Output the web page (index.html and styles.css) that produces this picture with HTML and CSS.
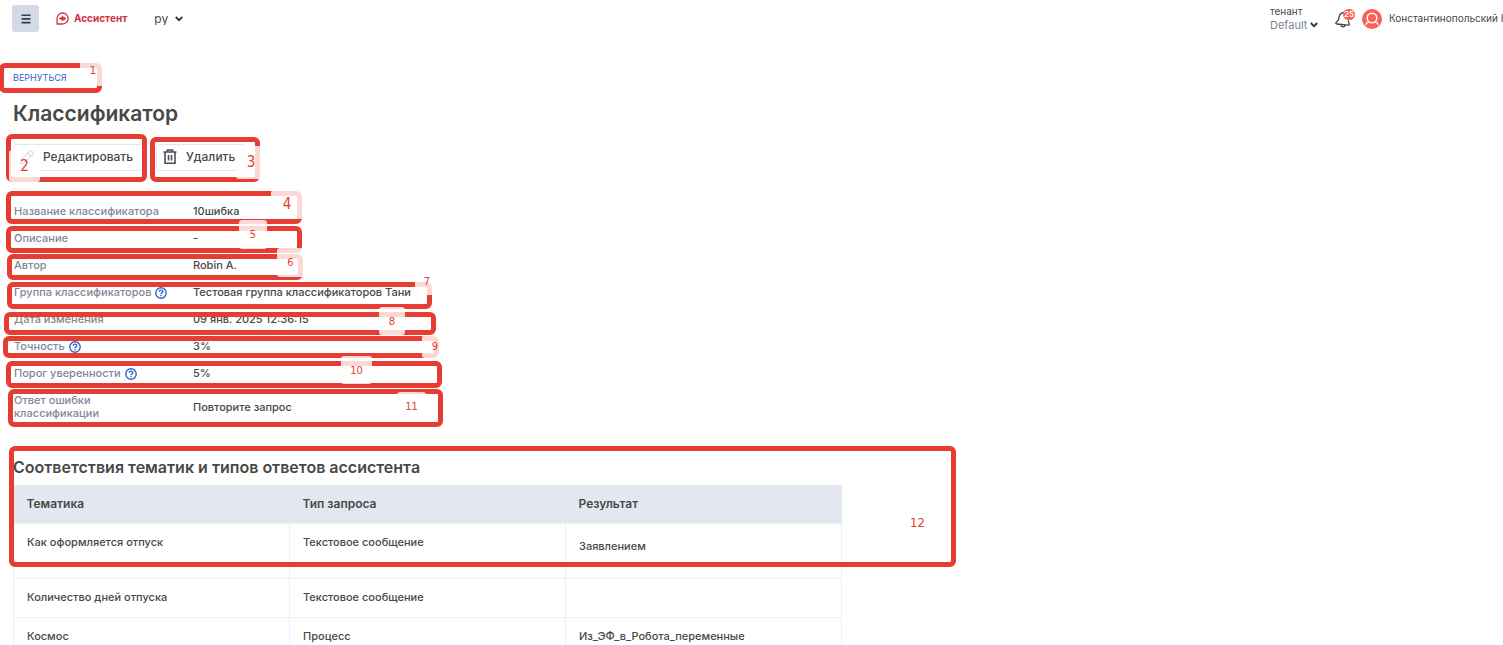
FILE: index.html
```html
<!DOCTYPE html>
<html lang="ru">
<head>
    <meta charset="UTF-8">
    <meta name="viewport" content="width=device-width, initial-scale=1.0">
    <title>Классификатор</title>
    <link rel="stylesheet" href="styles.css">
</head>
<body>
    <header class="topbar">
        <div class="topbar-left">
            <button class="menu-button" type="button" aria-label="Меню">
                <svg width="10" height="10" viewBox="0 0 10 10" stroke="#3a3f47" stroke-width="1.6"><path d="M0.5 1.2h9M0.5 4.9h9M0.5 8.6h9"/></svg>
            </button>
            <a class="brand" href="#">
                <svg width="13" height="13" viewBox="0 0 13 13" fill="none" stroke="#d0323f" stroke-width="1.3" stroke-linecap="round" stroke-linejoin="round">
                    <path d="M1.1 12V6.5a5.5 5.5 0 1 1 5.5 5.5z"/>
                    <path d="M3.8 6.5h5.6M5.3 5.4v2.2M6.7 4.4v4.2M8.1 5.4v2.2"/>
                </svg>
                Ассистент
            </a>
            <div class="picker">
                <select class="lang-select" aria-label="Язык">
                    <option>ру</option>
                </select>
                <svg width="8" height="6" viewBox="0 0 8 6" fill="none" stroke="#33373d" stroke-width="1.8"><path d="M0.8 1l3.2 3.2L7.2 1"/></svg>
            </div>
        </div>
        <div class="topbar-right">
            <div class="tenant">
                <label for="tenant">тенант</label>
                <div class="picker">
                    <select id="tenant" class="tenant-select">
                        <option>Default</option>
                    </select>
                    <svg width="8" height="6" viewBox="0 0 8 6" fill="none" stroke="#33373d" stroke-width="1.8"><path d="M0.8 1l3.2 3.2L7.2 1"/></svg>
                </div>
            </div>
            <button class="bell" type="button" aria-label="Уведомления">
                <svg width="17" height="17" viewBox="0 0 17 17" fill="none" stroke="#3f444c" stroke-width="1.3" stroke-linejoin="round">
                    <path d="M10.5 1.8C7.4 0.8 4.8 2.6 4.2 5.4L3.4 9 1 11.6c-.4.6 0 1.2.7 1.4l11.6 1.2c.8 0 1.2-.6.9-1.3L13.2 9.5"/>
                    <path d="M5.8 13.5c.3 2.8 3.8 3.1 4.5.5"/>
                </svg>
                <span class="badge">25</span>
            </button>
            <svg class="avatar" width="20" height="20" viewBox="0 0 20 20">
                <circle cx="10" cy="10" r="10" fill="#fb5f57"/>
                <g fill="none" stroke="#fff" stroke-width="1.5">
                    <circle cx="10" cy="9" r="4.8"/>
                    <path d="M3.8 15.8c.5-1.8 1.8-2.8 3.4-3.3M16.2 15.8c-.5-1.8-1.8-2.8-3.4-3.3"/>
                </g>
            </svg>
            <span class="user-name">Константинопольский Н</span>
        </div>
    </header>

    <main class="page">
        <a class="back" href="#">ВЕРНУТЬСЯ</a>
        <h1>Классификатор</h1>
        <div class="actions">
            <button type="button">
                <svg width="16" height="16" viewBox="0 0 16 16" fill="none" stroke="#4a4e55" stroke-width="1.2" stroke-linejoin="round"><path d="M1.5 14.5l1-4L10.8 2.2a1.4 1.4 0 0 1 2 0l1 1a1.4 1.4 0 0 1 0 2L5.5 13.5zM8.7 4.3l3 3"/></svg>
                Редактировать
            </button>
            <button type="button">
                <svg width="16" height="16" viewBox="0 0 16 16" fill="none" stroke="#4a4e55" stroke-width="1.6"><path d="M1.5 3h13M5.5 3V1h5v2M3 3v11.3h10V3M6.5 6v5.5M9.5 6v5.5"/></svg>
                Удалить
            </button>
        </div>

        <dl class="details">
            <dt>Название классификатора</dt>
            <dd>10шибка</dd>
            <dt>Описание</dt>
            <dd>-</dd>
            <dt>Автор</dt>
            <dd>Robin A.</dd>
            <dt>Группа классификаторов
                <svg class="help" width="12" height="12" viewBox="0 0 12 12" fill="none" stroke="#2f66c4" stroke-width="1.4"><circle cx="6" cy="6" r="5.2"/><path d="M4.3 4.8c0-2.2 3.5-2.2 3.5-.1 0 1.2-1.8 1.2-1.8 2.5M6 8v1.3"/></svg>
            </dt>
            <dd>Тестовая группа классификаторов Тани</dd>
            <dt>Дата изменения</dt>
            <dd>09 янв. 2025 12:36:15</dd>
            <dt>Точность
                <svg class="help" width="12" height="12" viewBox="0 0 12 12" fill="none" stroke="#2f66c4" stroke-width="1.4"><circle cx="6" cy="6" r="5.2"/><path d="M4.3 4.8c0-2.2 3.5-2.2 3.5-.1 0 1.2-1.8 1.2-1.8 2.5M6 8v1.3"/></svg>
            </dt>
            <dd>3%</dd>
            <dt>Порог уверенности
                <svg class="help" width="12" height="12" viewBox="0 0 12 12" fill="none" stroke="#2f66c4" stroke-width="1.4"><circle cx="6" cy="6" r="5.2"/><path d="M4.3 4.8c0-2.2 3.5-2.2 3.5-.1 0 1.2-1.8 1.2-1.8 2.5M6 8v1.3"/></svg>
            </dt>
            <dd>5%</dd>
            <dt>Ответ ошибки<br>классификации</dt>
            <dd>Повторите запрос</dd>
        </dl>

        <h2>Соответствия тематик и типов ответов ассистента</h2>
        <table class="topics">
            <thead>
                <tr>
                    <th>Тематика</th>
                    <th>Тип запроса</th>
                    <th>Результат</th>
                </tr>
            </thead>
            <tbody>
                <tr>
                    <td>Как оформляется отпуск</td>
                    <td>Текстовое сообщение</td>
                    <td><p class="reply">Заявлением</p></td>
                </tr>
                <tr>
                    <td>Количество дней отпуска</td>
                    <td>Текстовое сообщение</td>
                    <td></td>
                </tr>
                <tr>
                    <td>Космос</td>
                    <td>Процесс</td>
                    <td>Из_ЭФ_в_Робота_переменные</td>
                </tr>
            </tbody>
        </table>
    </main>

    <!-- numbered callouts over the page -->
    <div class="mark mark-1"><span>1</span></div>
    <div class="mark mark-2"><span>2</span></div>
    <div class="mark mark-3"><span>3</span></div>
    <div class="mark mark-4"><span>4</span></div>
    <div class="mark mark-5"><span>5</span></div>
    <div class="mark mark-6"><span>6</span></div>
    <div class="mark mark-7"><span>7</span></div>
    <div class="mark mark-8"><span>8</span></div>
    <div class="mark mark-9"><span>9</span></div>
    <div class="mark mark-10"><span>10</span></div>
    <div class="mark mark-11"><span>11</span></div>
    <div class="mark mark-12"><span>12</span></div>
</body>
</html>
```
FILE: styles.css
```css
* {
    box-sizing: border-box;
}
body {
    margin: 0;
    font-family: Inter, "Liberation Sans", sans-serif;
    font-size: 11px;
    line-height: 13px;
    color: #484848;
    background-color: #fff;
    position: relative;
    overflow: hidden;
}
h1, h2, p, dl, dd {
    margin: 0;
}
h1, h2, th {
    font-weight: 600;
}
a {
    text-decoration: none;
}
button {
    font: inherit;
    color: inherit;
    cursor: pointer;
}
select {
    appearance: none;
    font: inherit;
    border: none;
    background: none;
    padding: 0;
    margin: 0;
}

/* top bar */
.topbar {
    display: flex;
    justify-content: space-between;
    height: 37px;
}
.topbar-left, .topbar-right {
    display: flex;
    align-items: center;
}
.topbar-left {
    padding-left: 12px;
}
.menu-button {
    display: flex;
    align-items: center;
    justify-content: center;
    width: 27px;
    height: 27px;
    padding: 0;
    border: none;
    border-radius: 3px;
    background-color: #d3dae5;
}
.brand {
    display: flex;
    align-items: center;
    gap: 5px;
    margin: 0 27px 0 17px;
    color: #d0323f;
    font-size: 10px;
    font-weight: 700;
}
.picker {
    display: flex;
    align-items: center;
}
.picker svg {
    pointer-events: none;
}
.lang-select {
    font-size: 12px;
    color: #484848;
    margin-right: 7px;
}
.tenant {
    font-size: 10px;
    line-height: 13px;
    margin-right: 17px;
}
.tenant-select {
    font-size: 11px;
    line-height: 15px;
    color: #7a8396;
    margin-right: 2px;
}
.tenant label {
    display: block;
}
.bell {
    position: relative;
    width: 20px;
    height: 20px;
    padding: 2px 0 0;
    border: none;
    background: none;
    text-align: left;
}
.badge {
    position: absolute;
    top: 0;
    right: 0;
    width: 12px;
    height: 11px;
    border-radius: 6px;
    background-color: #fb5f57;
    color: #fff;
    font-size: 8px;
    font-weight: 600;
    line-height: 11px;
    text-align: center;
}
.avatar {
    margin: 0 7px;
}
.user-name {
    width: 114px;
    font-size: 10px;
    white-space: nowrap;
    overflow: hidden;
}

/* content */
.page {
    padding: 33px 13px 0;
}
.back {
    display: block;
    font-size: 9px;
    line-height: 16px;
    color: #2f66c4;
}
h1 {
    margin-top: 16px;
    font-size: 21px;
    line-height: 24px;
}
.actions {
    display: flex;
    gap: 13px;
    margin-top: 18px;
}
.actions button {
    display: flex;
    align-items: center;
    gap: 8px;
    height: 27px;
    padding: 0 9px 2px 5px;
    border: 1px solid #e3e6ef;
    border-radius: 3px;
    background-color: #fff;
    font-size: 12px;
    font-weight: 500;
}
.details {
    display: grid;
    grid-template-columns: 179px 1fr;
    align-items: center;
    row-gap: 14px;
    margin: 34px 0 38px;
    padding-left: 1px;
}
.details, .topics td {
    font-weight: 500;
}
.details dt {
    color: #828797;
}
.help {
    display: inline-block;
    vertical-align: -3px;
    margin-left: 1px;
}
h2 {
    font-size: 16px;
    line-height: 18px;
}
.topics {
    width: 829px;
    max-width: 100%;
    margin-top: 9px;
    table-layout: fixed;
    border-collapse: collapse;
}
.topics th, .topics td {
    padding: 12px 13px 13px;
    text-align: left;
    vertical-align: top;
}
.topics th {
    background-color: #e3e7f0;
    font-size: 12px;
}
.topics td {
    height: 39px;
    border: 1px solid #eff0f7;
}
.reply {
    padding: 4px 0 12px;
}

/* callouts */
.mark {
    position: absolute;
    border: 5px solid #e63c32;
    border-radius: 6px;
    pointer-events: none;
}
.mark span {
    position: absolute;
    display: flex;
    align-items: center;
    justify-content: center;
    border-radius: 3px;
    background-color: rgba(255, 255, 255, 0.8);
    color: #e63c32;
    font-family: "DejaVu Sans Condensed", "DejaVu Sans", sans-serif;
    font-size: 11px;
}
.mark-1 { left: -1px; top: 63px; width: 103px; height: 30px; }
.mark-1 span { left: 76px; top: -13px; width: 26px; height: 31px; }
.mark-2 { left: 6px; top: 134px; width: 141px; height: 48px; }
.mark-2 span { left: -2px; top: 11px; width: 31px; height: 32px; font-size: 15px; }
.mark-3 { left: 150px; top: 137px; width: 110px; height: 45px; }
.mark-3 span { left: 81px; top: 4px; width: 30px; height: 33px; font-size: 15px; }
.mark-4 { left: 6px; top: 191px; width: 296px; height: 33px; }
.mark-4 span { left: 260px; top: -6px; width: 32px; height: 29px; font-size: 15px; }
.mark-5 { left: 6px; top: 226px; width: 296px; height: 27px; }
.mark-5 span { left: 228px; top: -11px; width: 28px; height: 29px; }
.mark-6 { left: 7px; top: 254px; width: 296px; height: 26px; }
.mark-6 span { left: 265px; top: -11px; width: 27px; height: 29px; }
.mark-7 { left: 7px; top: 282px; width: 425px; height: 27px; }
.mark-7 span { left: 403px; top: -19px; width: 24px; height: 27px; }
.mark-8 { left: 4px; top: 312px; width: 432px; height: 23px; }
.mark-8 span { left: 370px; top: -10px; width: 26px; height: 28px; }
.mark-9 { left: 3px; top: 336px; width: 436px; height: 22px; }
.mark-9 span { left: 414px; top: -6px; width: 26px; height: 23px; }
.mark-10 { left: 6px; top: 361px; width: 436px; height: 27px; }
.mark-10 span { left: 330px; top: -10px; width: 31px; height: 28px; }
.mark-11 { left: 8px; top: 389px; width: 435px; height: 38px; }
.mark-11 span { left: 384px; top: -2px; width: 29px; height: 29px; }
.mark-12 { left: 9px; top: 446px; width: 947px; height: 121px; }
.mark-12 span { left: 889px; top: 57px; width: 29px; height: 29px; font-size: 13px; }
```
